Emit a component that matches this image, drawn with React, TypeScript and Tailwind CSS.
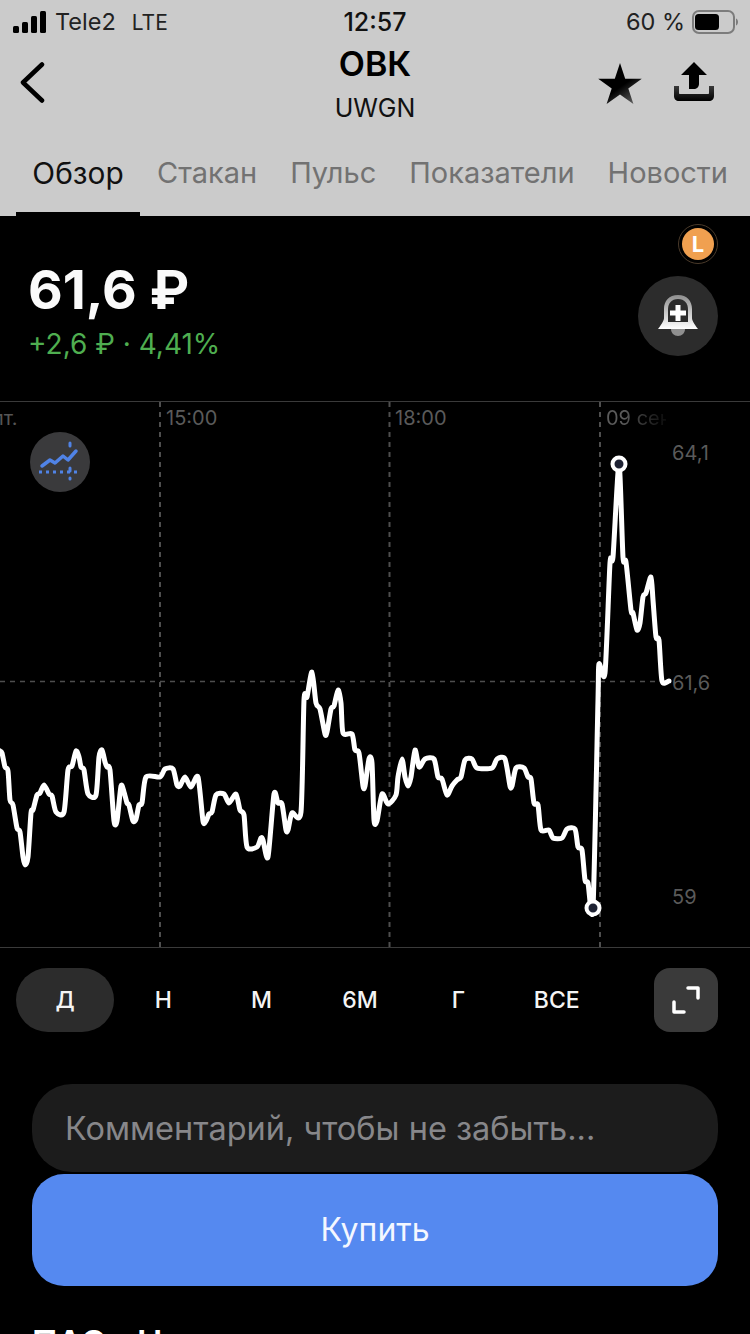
const POINTS: [number, number][] = [
  [0, 751], [2, 753], [5, 767], [8, 771], [10, 800], [13, 805], [17, 828], [20, 832], [23, 857], [25, 865], [28, 857], [31, 813],
  [33, 810], [37, 795], [40, 793], [44, 785], [49, 794], [52, 796], [56, 812], [64, 812], [68, 770], [72, 766], [76, 751], [79, 757],
  [81, 767], [84, 770], [88, 794], [96, 795], [99, 757], [102, 750], [105, 762], [107, 767], [110, 770], [114, 821], [117, 821],
  [121, 786], [124, 792], [127, 803], [129, 805], [133, 821], [136, 819], [139, 805], [142, 803], [146, 777], [160, 777], [165, 769],
  [173, 769], [177, 785], [180, 786], [185, 777], [191, 787], [198, 777], [203, 821], [206, 821], [209, 814], [212, 812], [216, 795],
  [224, 794], [229, 803], [236, 794], [240, 810], [244, 815], [247, 847], [257, 847], [261, 838], [263, 840], [268, 857], [274, 794],
  [278, 803], [282, 804], [286, 830], [288, 830], [292, 813], [301, 812], [304, 700], [307, 697], [312, 672], [316, 703], [320, 709],
  [325, 734], [327, 732], [331, 709], [334, 706], [338, 690], [341, 703], [343, 733], [352, 734], [355, 750], [359, 753], [363, 786],
  [365, 786], [369, 759], [372, 763], [374, 820], [377, 821], [382, 794], [388, 804], [396, 795], [398, 777], [402, 759], [405, 777],
  [408, 786], [411, 777], [415, 750], [419, 767], [425, 759], [434, 759], [438, 777], [442, 779], [447, 795], [452, 786], [457, 780],
  [461, 777], [465, 760], [472, 759], [477, 768], [492, 768], [497, 759], [505, 759], [510, 786], [512, 786], [516, 768], [524, 768],
  [528, 777], [531, 779], [534, 803], [538, 805], [541, 830], [549, 830], [553, 838], [562, 838], [567, 829], [575, 829], [578, 847],
  [582, 850], [585, 880], [588, 883], [593, 908], [598, 700], [599, 664], [605, 673], [610, 563], [613, 557], [619, 464], [623, 557],
  [626, 562], [631, 610], [633, 613], [637, 630], [640, 623], [643, 597], [646, 593], [651, 577], [653, 600], [656, 637], [659, 640],
  [662, 681], [669, 681],
];

// catmull-rom through the points, y is shifted to the chart's own top
const CHART_TOP = 402;
function linePath() {
  const p = POINTS.map(([x, y]) => [x, y - CHART_TOP]);
  let d = `M${p[0][0]} ${p[0][1]}`;
  for (let i = 0; i < p.length - 1; i++) {
    const a = p[Math.max(i - 1, 0)];
    const b = p[i];
    const c = p[i + 1];
    const e = p[Math.min(i + 2, p.length - 1)];
    const k = 8;
    d += ` C${b[0] + (c[0] - a[0]) / k} ${b[1] + (c[1] - a[1]) / k} ${c[0] - (e[0] - b[0]) / k} ${c[1] - (e[1] - b[1]) / k} ${c[0]} ${c[1]}`;
  }
  return d;
}

const tabs = ['Стакан', 'Пульс', 'Показатели', 'Новости'];
const ranges = ['Н', 'М', '6М', 'Г', 'ВСЕ'];

function StatusBar() {
  return (
    <div className="flex h-10 items-center justify-between pt-1 pl-[13px] pr-[12px] text-[23.500px] leading-none text-[#111]">
      <div className="flex w-[260px] items-center">
        <svg width="34" height="22" viewBox="0 0 34 22" fill="#000">
          <rect x="0" y="15" width="6" height="7" rx="1.5" />
          <rect x="9" y="11" width="6" height="11" rx="1.5" />
          <rect x="18" y="5" width="6" height="17" rx="1.5" />
          <rect x="27" y="0" width="6" height="22" rx="1.5" />
        </svg>
        <span className="ml-[8px] text-[#222]">Tele2</span>
        <span className="ml-[16px] text-[21px] text-[#222]">LTE</span>
      </div>
      <span className="text-[25px] font-medium">12:57</span>
      <div className="flex w-[261px] items-center justify-end">
        <span className="mr-[7px] text-[#222]">60 %</span>
        <svg width="46" height="24" viewBox="0 0 46 24">
          <rect x="1" y="1" width="41" height="22" rx="6" fill="none" stroke="#7c7c7c" strokeWidth="2" />
          <rect x="3" y="4" width="24" height="16" rx="3.5" fill="#000" />
          <path d="M44 8.500c1.500.6 2 2 2 3.500s-.5 2.900-2 3.500z" fill="#7c7c7c" />
        </svg>
      </div>
    </div>
  );
}

function Header() {
  return (
    <div className="bg-[#cbcbcb]">
      <StatusBar />
      <div className="grid h-[88px] grid-cols-[1fr_auto_1fr] items-start px-[20px]">
        <svg className="mt-[22px]" width="25" height="41" viewBox="0 0 25 41" fill="none" stroke="#000" strokeWidth="4.5" strokeLinecap="round" strokeLinejoin="round">
          <path d="M22 2.500 3 20.500l19 18" />
        </svg>
        <div className="flex flex-col items-center pt-[2px]">
          <span className="text-[34px] leading-[44px] font-semibold text-black">ОВК</span>
          <span className="mt-[4px] text-[25px] leading-[36px] text-[#111]">UWGN</span>
        </div>
        <div className="flex items-start justify-end gap-[32px] pt-[22px] pr-[16px]">
          <svg width="44" height="44" viewBox="0 0 44 44">
            <defs>
              <linearGradient id="star" x1="0.55" y1="0.55" x2="0.85" y2="0.95">
                <stop offset="0" stopColor="#000" />
                <stop offset="1" stopColor="#5c5c5c" />
              </linearGradient>
            </defs>
            <path d="M22 1l5.200 15.800h16.600L30.300 26.500l5.100 15.500L22 32.400 8.600 42l5.100-15.500L.2 16.800h16.600z" fill="url(#star)" />
          </svg>
          <svg width="40" height="40" viewBox="0 0 40 40">
            <defs>
              <linearGradient id="tray" x1="0" y1="0" x2="0" y2="1">
                <stop offset="0" stopColor="#3a3a3a" />
                <stop offset="1" stopColor="#000" />
              </linearGradient>
            </defs>
            <path d="M20 0l13 13h-8v9c0 3-2.500 5-5 5h-5V13H7z" fill="#000" />
            <path d="M0 24h5v7c0 .6.400 1 1 1h28c.6 0 1-.4 1-1v-7h5v10c0 3-2 5-5 5H5c-3 0-5-2-5-5z" fill="url(#tray)" />
          </svg>
        </div>
      </div>
      <div className="flex h-[88px] items-start text-[29px] leading-[42px]">
        <div className="ml-[16px] flex h-[88px] w-[124px] justify-center border-b-4 border-black pt-[24px] text-[29.800px] text-[#111]">Обзор</div>
        <div className="ml-[17px] flex gap-[33px] pt-[24px] text-[#727272]">
          {tabs.map((t) => (
            <span key={t}>{t}</span>
          ))}
        </div>
      </div>
    </div>
  );
}

function Quote() {
  return (
    <div className="relative h-[186px] border-b border-[#3a3a3a] pl-[28px] pt-[41px]">
      <div className="text-[53.500px] leading-[66px] font-bold text-[#fafafa]">61,6 ₽</div>
      <div className="mt-[3px] text-[28px] leading-[36px] text-[#4fae50]">+2,6 ₽ · 4,41%</div>
      <div className="absolute top-[8px] right-[32px] flex h-[40px] w-[40px] items-center justify-center rounded-full border border-[#4a3a2a]">
        <div className="flex h-[32px] w-[32px] items-center justify-center rounded-full bg-[#f0a050] text-[22px] leading-none font-bold text-white">L</div>
      </div>
      <div className="absolute top-[60px] right-[32px] flex h-[80px] w-[80px] items-center justify-center rounded-full bg-[#2c2c2c]">
        <svg width="40" height="42" viewBox="0 0 40 42">
          <defs>
            <linearGradient id="bell" x1="0" y1="0" x2="0" y2="1">
              <stop offset="0" stopColor="#8e8e8e" />
              <stop offset="1" stopColor="#ffffff" />
            </linearGradient>
          </defs>
          <path d="M13 34h14c0 4-3 7-7 7s-7-3-7-7z" fill="#8f8f8f" />
          <path d="M20 0C11 0 6 6 6 14v9c0 2-1.500 5-6 11h40c-4.500-6-6-9-6-11v-9C34 6 29 0 20 0z" fill="url(#bell)" />
          <path d="M20 4c-6.500 0-10 4.500-10 10.500V27h20V14.500C30 8.500 26.500 4 20 4z" fill="#2c2c2c" />
          <path d="M17.500 10h5v5.500H28v5h-5.500V26h-5v-5.500H12v-5h5.500z" fill="#fff" />
        </svg>
      </div>
    </div>
  );
}

function Chart() {
  return (
    <div className="relative h-[546px] border-b border-[#3a3a3a]">
      <svg className="absolute inset-0" width="750" height="546" viewBox="0 0 750 546" fill="none">
        <g stroke="#4e4e4e" strokeWidth="2" strokeDasharray="5 5">
          <path d="M160 0v546M389.500 0v546M600 0v546" />
        </g>
        <path d="M0 279.500h670" stroke="#4e4e4e" strokeWidth="1.500" strokeDasharray="5 5" />
        <path d={linePath()} stroke="#fff" strokeWidth="5" strokeLinejoin="round" strokeLinecap="round" />
        <circle cx="619" cy="62" r="6.500" fill="#1e2233" stroke="#fff" strokeWidth="4" />
        <circle cx="593" cy="506" r="6.500" fill="#1e2233" stroke="#fff" strokeWidth="4" />
      </svg>
      <span className="absolute top-[4px] left-[-8px] text-[20px] leading-6 text-[#555]">пт.</span>
      <span className="absolute top-[4px] left-[166px] text-[20px] leading-6 text-[#5a5a5a]">15:00</span>
      <span className="absolute top-[4px] left-[395px] text-[20px] leading-6 text-[#5a5a5a]">18:00</span>
      <span className="absolute top-[4px] left-[606px] w-[60px] overflow-hidden bg-gradient-to-r from-[#5a5a5a] from-30% to-[#0c0c0c] bg-clip-text text-[20px] leading-6 whitespace-nowrap text-transparent">09 сен</span>
      <span className="absolute top-[39px] left-[672px] text-[20px] leading-6 text-[#5a5a5a]">64,1</span>
      <span className="absolute top-[269px] left-[672px] text-[20px] leading-6 text-[#5a5a5a]">61,6</span>
      <span className="absolute top-[483px] left-[672px] text-[20px] leading-6 text-[#5a5a5a]">59</span>
      <div className="absolute top-[30px] left-[30px] flex h-[60px] w-[60px] items-center justify-center rounded-full bg-[#3a3a3c]">
        <svg width="44" height="44" viewBox="0 0 44 44" fill="none">
          <path d="M4 26l8-6 5 3 8-7 5 4 8-9" stroke="#5083e6" strokeWidth="3.500" strokeLinejoin="round" strokeLinecap="round" />
          <path d="M1 32h40" stroke="#5083e6" strokeWidth="3" strokeDasharray="3 4" />
          <path d="M32 3v4M32 28v11" stroke="#5083e6" strokeWidth="3" strokeLinecap="round" strokeDasharray="3 7" />
        </svg>
      </div>
    </div>
  );
}

function RangeBar() {
  return (
    <div className="flex h-[64px] items-center pl-[16px] pr-[32px] text-[23px] font-medium text-[#f4f4f4]">
      <div className="flex h-[64px] w-[98px] items-center justify-center rounded-[32px] bg-[#2c2c2c]">Д</div>
      {ranges.map((r) => (
        <div key={r} className="flex w-[98.400px] justify-center">{r}</div>
      ))}
      <div className="ml-auto flex h-[64px] w-[64px] items-center justify-center rounded-[16px] bg-[#3a3a3a]">
        <svg width="30" height="30" viewBox="0 0 30 30" fill="none" stroke="#fff" strokeWidth="3.500" strokeLinecap="round" strokeLinejoin="round">
          <path d="M17 3h10v10" />
          <path d="M3 17v10h10" />
        </svg>
      </div>
    </div>
  );
}

export default function App() {
  return (
    <div className="h-[1334px] w-[750px] overflow-hidden bg-black font-['Inter','Noto_Sans',sans-serif]">
      <Header />
      <Quote />
      <Chart />
      <div className="pt-[20px]">
        <RangeBar />
      </div>
      <div className="mx-[32px] mt-[52px] flex h-[88px] items-center rounded-[40px] bg-[#1c1c1c] pl-[33px] pt-[2px] text-[32.500px] text-[#87878a]">Комментарий, чтобы не забыть...</div>
      <div className="mx-[32px] mt-[2px] flex h-[112px] items-center justify-center rounded-[32px] bg-[#5589f0] text-[32px] text-[#f4f7ff]">Купить</div>
      <div className="mt-[34px] pl-[32px] text-[34px] leading-[46px] font-semibold whitespace-nowrap text-white">ПАО «Научно-производственная»</div>
    </div>
  );
}
